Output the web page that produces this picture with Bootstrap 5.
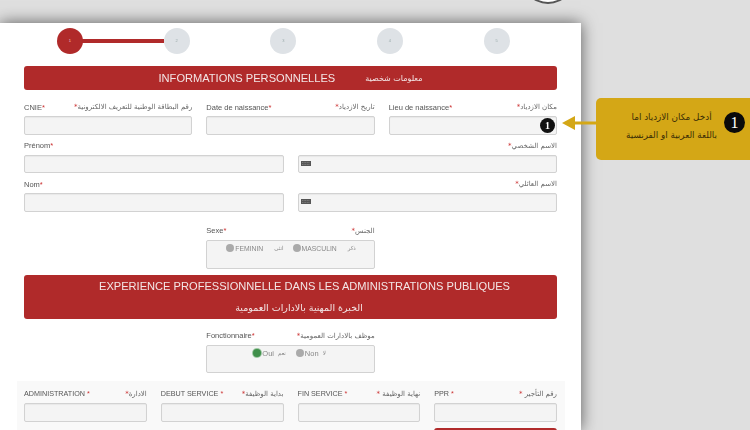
<!DOCTYPE html>
<html lang="fr">
<head>
<meta charset="utf-8">
<title>Formulaire</title>
<link rel="stylesheet" href="https://cdn.jsdelivr.net/npm/bootstrap@5.3.0/dist/css/bootstrap.min.css">
<style>
html,body{height:430px;overflow:hidden}
body{background:#dfdfdf;font-family:"Liberation Sans",Arial,sans-serif;position:relative;width:750px;filter:blur(.3px)}
.ar{font-family:"DejaVu Sans","Noto Sans",sans-serif}
.top-disc{position:absolute;left:518px;top:-66px;width:60px;height:70px;border-radius:50%;background:#fff;border:2px solid #555}
.sheet{width:581px;height:407px;margin-top:23px;background:#fff;box-shadow:0 0 15px rgba(0,0,0,.6);padding:5px 24px 0;overflow:hidden}
.stepper{margin:0 7px 0 -7.5px}
.step{flex:1 1 0;position:relative;display:flex;justify-content:center}
.dot{width:26px;height:26px;border-radius:50%;background:#dee2e6;color:#9aa;font-size:4px;display:flex;align-items:center;justify-content:center;position:relative;z-index:1}
.step.on .dot{background:#b02a2a;color:#f6c9c9}
.step.on::after{content:"";position:absolute;left:65px;width:82px;top:11px;height:4px;background:#b02a2a}
.band{background:#b02a2a;color:#f3e6e6;border-radius:3px;text-align:center;font-size:11.1px;line-height:15px}
.band-one{height:24px;margin-top:12px;display:flex;align-items:center;justify-content:center;gap:30px}
.band-one .ar{font-size:8px}
.band-two{height:44px;margin-top:6px;padding-top:4px}
.band-two .head{padding-left:28px}
.band-two .ar{font-size:9.5px;margin-top:6px;display:block;padding-left:17px}
.gutter{--bs-gutter-x:14px}
.first-row{margin-top:6px}
.lab{display:flex;justify-content:space-between;align-items:center;font-size:7.5px;color:#555;height:20px;padding-top:3px;line-height:1}
.lab .ar{font-size:7px;color:#666}
.lab i{color:#c33;font-style:normal}
.field{height:18.5px;min-height:0;padding:0;border-radius:2px;background:#f4f4f4;border:1px solid #d2d2d2;box-shadow:inset 0 1px 1px rgba(0,0,0,.05)}
.slot{position:relative}
.keys{position:absolute;left:3px;top:6px;width:10px;height:5px;display:block}
.bullet{position:absolute;right:2px;top:2px;width:15px;height:15px;border-radius:50%;background:#111;color:#fff;font:700 10px/15px "Liberation Serif",serif;text-align:center}
.pick{height:29px;border:1px solid #d2d2d2;border-radius:2px;background:#f4f4f4;font-size:6.8px;color:#888;display:flex;align-items:flex-start;gap:6px;padding-top:3px;line-height:9px}
.pick .ar{font-size:5.5px;margin:0 3px 0 5px}
.pick label{display:flex;align-items:center;gap:1px}
.pick input{appearance:none;width:8px;height:8px;border-radius:50%;background:#aaa;margin:0}
.pick input:checked{background:#3f8f4a;box-shadow:0 0 0 1px #9cc7a2}
.pick-sex{padding-left:19px}
.pick-job{padding-left:46px;height:28.5px;gap:4px;font-size:7.5px}
.pick-job .ar{margin:0 6px 0 0}
.sex-row{margin-top:8px}
.job-row{margin-top:6px}
.shade{background:#f9f9f9;margin:8px -8px 0 -7px;padding:0 8px 0 7px;height:60px}
.shade .lab{height:22px;padding-top:4px;font-size:7.2px}
.go{height:10px;margin-top:6px;background:#b02a2a;border:0;border-radius:3px;width:100%;display:block;padding:0}
.hint{position:absolute;left:596px;top:98px;width:154px;height:62px;background:#d4a716;border-radius:5px 0 0 5px;display:flex;align-items:flex-start;justify-content:flex-end;gap:7px;padding:14px 5px 0 0;color:#3a2d06}
.hint-text{font-size:8.8px;line-height:18px;text-align:center;margin-top:-4px;white-space:nowrap}
.hint-num{width:21px;height:21px;border-radius:50%;background:#0a0a0a;color:#fff;font:400 16px/21px "Liberation Serif",serif;text-align:center;flex:none}
.pointer{position:absolute;left:562px;top:116px;width:35px;height:14px}
</style>
</head>
<body>
<div class="top-disc"></div>
<main class="sheet">
  <div class="stepper d-flex">
    <div class="step on"><div class="dot">1</div></div>
    <div class="step"><div class="dot">2</div></div>
    <div class="step"><div class="dot">3</div></div>
    <div class="step"><div class="dot">4</div></div>
    <div class="step"><div class="dot">5</div></div>
  </div>
  <div class="band band-one"><span>INFORMATIONS PERSONNELLES</span><span class="ar" dir="rtl">معلومات شخصية</span></div>

  <div class="row gutter first-row">
    <div class="col-4"><div class="lab"><span>CNIE<i>*</i></span><span class="ar" dir="rtl">رقم البطاقة الوطنية للتعريف الالكترونية<i>*</i></span></div><input class="form-control field" type="text"></div>
    <div class="col-4"><div class="lab"><span>Date de naissance<i>*</i></span><span class="ar" dir="rtl">تاريخ الازدياد<i>*</i></span></div><input class="form-control field" type="text"></div>
    <div class="col-4"><div class="lab"><span>Lieu de naissance<i>*</i></span><span class="ar" dir="rtl">مكان الازدياد<i>*</i></span></div><div class="slot"><input class="form-control field" type="text"><span class="bullet">1</span></div></div>
  </div>
  <div class="row gutter">
    <div class="col-6"><div class="lab"><span>Prénom<i>*</i></span></div><input class="form-control field" type="text"></div>
    <div class="col-6"><div class="lab justify-content-end"><span class="ar" dir="rtl">الاسم الشخصي<i>*</i></span></div><div class="slot"><input class="form-control field" type="text" dir="rtl"><svg class="keys" viewBox="0 0 10 5"><rect width="10" height="5" fill="#555"/><path d="M1 1.5h8M1 3.5h8" stroke="#999" stroke-width=".6" stroke-dasharray="1 .6"/></svg></div></div>
  </div>
  <div class="row gutter">
    <div class="col-6"><div class="lab"><span>Nom<i>*</i></span></div><input class="form-control field" type="text"></div>
    <div class="col-6"><div class="lab justify-content-end"><span class="ar" dir="rtl">الاسم العائلي<i>*</i></span></div><div class="slot"><input class="form-control field" type="text" dir="rtl"><svg class="keys" viewBox="0 0 10 5"><rect width="10" height="5" fill="#555"/><path d="M1 1.5h8M1 3.5h8" stroke="#999" stroke-width=".6" stroke-dasharray="1 .6"/></svg></div></div>
  </div>

  <div class="row gutter justify-content-center sex-row">
    <div class="col-4">
      <div class="lab"><span>Sexe<i>*</i></span><span class="ar" dir="rtl">الجنس<i>*</i></span></div>
      <div class="pick pick-sex">
        <label><input type="radio" name="sexe">FEMININ</label><span class="ar" dir="rtl">انثى</span>
        <label><input type="radio" name="sexe">MASCULIN</label><span class="ar" dir="rtl">ذكر</span>
      </div>
    </div>
  </div>

  <div class="band band-two"><div class="head">EXPERIENCE PROFESSIONNELLE DANS LES ADMINISTRATIONS PUBLIQUES</div><span class="ar" dir="rtl">الخبرة المهنية بالادارات العمومية</span></div>

  <div class="row gutter justify-content-center job-row">
    <div class="col-4">
      <div class="lab"><span>Fonctionnaire<i>*</i></span><span class="ar" dir="rtl">موظف بالادارات العمومية<i>*</i></span></div>
      <div class="pick pick-job">
        <label><input type="radio" name="fonc" checked>Oui</label><span class="ar" dir="rtl">نعم</span>
        <label><input type="radio" name="fonc">Non</label><span class="ar" dir="rtl">لا</span>
      </div>
    </div>
  </div>

  <div class="shade">
    <div class="row gutter">
      <div class="col-3"><div class="lab"><span>ADMINISTRATION <i>*</i></span><span class="ar" dir="rtl">الادارة<i>*</i></span></div><input class="form-control field" type="text"></div>
      <div class="col-3"><div class="lab"><span>DEBUT SERVICE <i>*</i></span><span class="ar" dir="rtl">بداية الوظيفة<i>*</i></span></div><input class="form-control field" type="text"></div>
      <div class="col-3"><div class="lab"><span>FIN SERVICE <i>*</i></span><span class="ar" dir="rtl">نهاية الوظيفة <i>*</i></span></div><input class="form-control field" type="text"></div>
      <div class="col-3"><div class="lab"><span>PPR <i>*</i></span><span class="ar" dir="rtl">رقم التأجير <i>*</i></span></div><input class="form-control field" type="text"><button class="go" type="button" aria-label="Ajouter"></button></div>
    </div>
  </div>
</main>

<svg class="pointer" viewBox="0 0 35 14"><path d="M0 7 13 0V5.5H35V8.5H13V14Z" fill="#d4a716"/></svg>
<aside class="hint"><div class="hint-text ar" dir="rtl">أدخل مكان الازدياد اما<br>باللغة العربية او الفرنسية</div><div class="hint-num">1</div></aside>
<script src="https://cdn.jsdelivr.net/npm/bootstrap@5.3.0/dist/js/bootstrap.bundle.min.js"></script>
</body>
</html>
